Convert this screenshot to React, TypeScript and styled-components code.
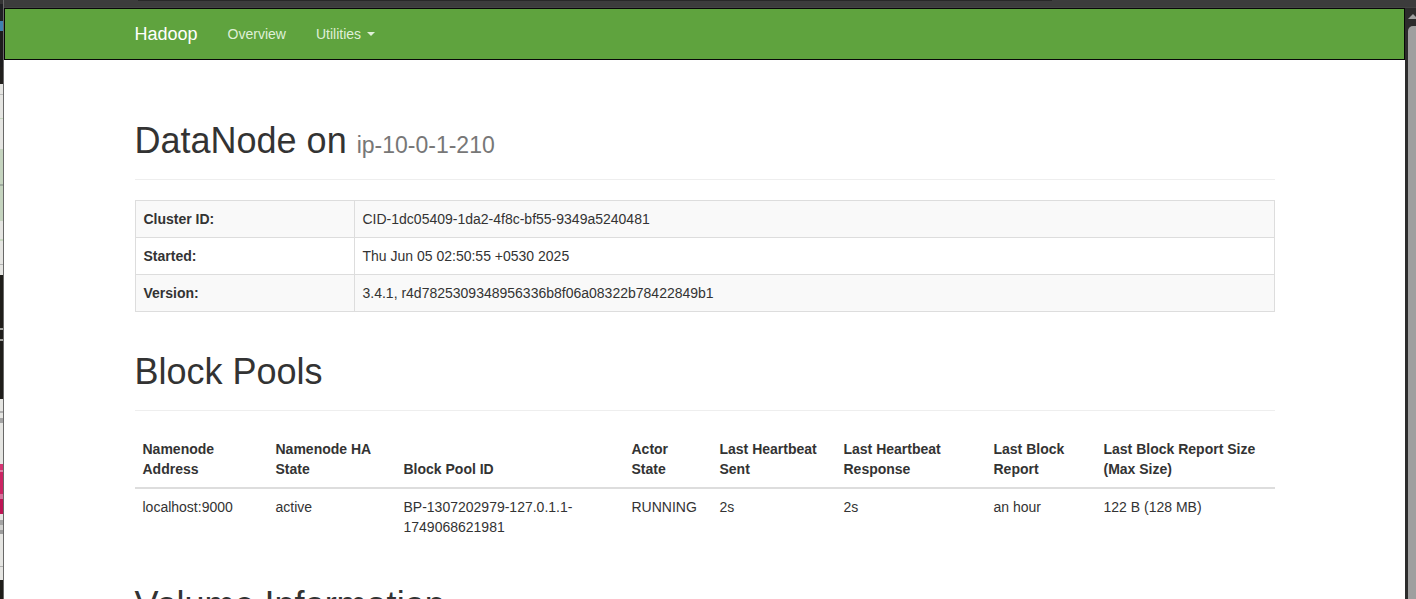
import React from "react";
import styled, { createGlobalStyle } from "styled-components";

const GlobalStyle = createGlobalStyle`
  *, *::before, *::after { box-sizing: border-box; }
  body {
    margin: 0;
    background: #ffffff;
    color: #333333;
    font-family: "Liberation Sans", Arial, sans-serif;
    font-size: 14px;
    line-height: 20px;
  }
`;

const Desktop = styled.div`
  display: flex;
  height: 100vh;
  overflow: hidden;
`;

const Backdrop = styled.div`
  display: flex;
  flex-direction: column;
  flex: 0 0 4px;
  border-right: 1px solid #686868;
`;

const Slice = styled.div<{ $h?: number; $color: string }>`
  flex: ${(p) => (p.$h ? `0 0 ${p.$h}px` : "1 0 0")};
  background: ${(p) => p.$color};
`;

const Window = styled.div`
  display: flex;
  flex-direction: column;
  flex: 1;
  min-width: 0;
`;

const WindowEdge = styled.div`
  flex: 0 0 8px;
  padding: 0 364px 0 134px;
  background: #3c3c3c;
  border-bottom: 1px solid #444444;

  &::before {
    content: "";
    display: block;
    height: 1px;
    background: #282828;
  }
`;

const View = styled.div`
  display: flex;
  flex: 1;
  min-height: 0;
`;

const Page = styled.div`
  flex: 1;
  min-width: 0;
  overflow: hidden;
  background: #ffffff;
`;

const Scrollbar = styled.div`
  display: flex;
  flex-direction: column;
  flex: 0 0 11px;
  padding: 6px 0 0 3px;
  overflow: hidden;
  background: #2c2c2c;
`;

const ScrollArrow = styled.svg`
  flex: none;
  display: block;
  margin-bottom: 7px;
`;

const ScrollThumb = styled.div`
  flex: 1;
  width: 14px;
  border-radius: 5px 5px 0 0;
  background: #9f9f9f;
`;

const Container = styled.div`
  max-width: 1170px;
  margin: 0 auto;
  padding: 0 15px;
`;

const Navbar = styled.header`
  background: #5fa33e;
  border: 1px solid #080808;
`;

const NavRow = styled(Container)`
  display: flex;
  align-items: center;
  gap: 30px;
  height: 50px;
`;

const Brand = styled.a`
  color: #ffffff;
  font-size: 18px;
  text-decoration: none;
`;

const NavItems = styled.nav`
  display: flex;
  gap: 30px;
`;

const NavLink = styled.a`
  color: #dff0d8;
  text-decoration: none;
`;

const NavButton = styled.button`
  display: flex;
  align-items: center;
  gap: 6px;
  padding: 0;
  border: 0;
  background: none;
  color: #dff0d8;
  font: inherit;
`;

const Caret = styled.span`
  border-top: 4px solid currentColor;
  border-left: 4px solid transparent;
  border-right: 4px solid transparent;
`;

const Content = styled(Container).attrs({ as: "main" })`
  padding-top: 61px;
`;

const Heading = styled.h1`
  margin: 0 0 20px;
  padding-bottom: 19px;
  border-bottom: 1px solid #eeeeee;
  font-size: 36px;
  font-weight: 500;
  line-height: 39px;

  table + & {
    margin-top: 40px;
  }
`;

const Host = styled.small`
  color: #777777;
  font-size: 23px;
  font-weight: 400;
  line-height: 1;
`;

const DataTable = styled.table`
  width: 100%;
  table-layout: fixed;
  border-collapse: collapse;

  th,
  td {
    padding: 8px;
    text-align: left;
    vertical-align: top;
  }
`;

const InfoTable = styled(DataTable)`
  th,
  td {
    border: 1px solid #dddddd;
  }

  th {
    width: 219px;
  }

  tr:nth-child(odd) {
    background: #f9f9f9;
  }
`;

const PoolTable = styled(DataTable)`
  thead th {
    vertical-align: bottom;
    border-bottom: 2px solid #dddddd;
  }
`;

const Col = styled.col<{ $w: number }>`
  width: ${(p) => p.$w}px;
`;

const slices: [number, string][] = [
  [4, "#343434"],
  [17, "#202124"],
  [10, "#3f80b0"],
  [36, "#1d1d1d"],
  [17, "#211f1c"],
  [10, "#e5e5e2"],
  [1, "#bcbcbc"],
  [23, "#e5e5e2"],
  [1, "#c4d6bd"],
  [30, "#e5e5e2"],
  [35, "#c5d4bf"],
  [2, "#a0aca0"],
  [35, "#c5d4bf"],
  [18, "#e5e5e2"],
  [2, "#c7d8c0"],
  [23, "#e5e5e2"],
  [1, "#b4b4b4"],
  [10, "#e5e5e2"],
  [53, "#1f1d1a"],
  [2, "#a0a09c"],
  [9, "#1f1d1a"],
  [2, "#a0a09c"],
  [58, "#1f1d1a"],
  [12, "#e5e5e2"],
  [2, "#b0b0b0"],
  [5, "#e5e5e2"],
  [5, "#a4a4a4"],
  [41, "#e5e5e2"],
  [6, "#d63372"],
  [2, "#dd80a4"],
  [22, "#cc2463"],
  [5, "#d6709a"],
  [15, "#bd1454"],
  [6, "#e5e5e2"],
  [5, "#a4a4a4"],
  [5, "#d0d0ce"],
  [4, "#9c9c9c"],
  [32, "#e5e5e2"],
  [1, "#b0b0b0"],
  [13, "#e5e5e2"],
];

const info = [
  ["Cluster ID:", "CID-1dc05409-1da2-4f8c-bf55-9349a5240481"],
  ["Started:", "Thu Jun 05 02:50:55 +0530 2025"],
  ["Version:", "3.4.1, r4d7825309348956336b8f06a08322b78422849b1"],
];

const pools = [
  { title: "Namenode Address", width: 133, value: "localhost:9000" },
  { title: "Namenode HA State", width: 128, value: "active" },
  { title: "Block Pool ID", width: 228, value: "BP-1307202979-127.0.1.1-1749068621981" },
  { title: "Actor State", width: 88, value: "RUNNING" },
  { title: "Last Heartbeat Sent", width: 124, value: "2s" },
  { title: "Last Heartbeat Response", width: 150, value: "2s" },
  { title: "Last Block Report", width: 110, value: "an hour" },
  { title: "Last Block Report Size (Max Size)", width: 179, value: "122 B (128 MB)" },
];

export default function App() {
  return (
    <Desktop>
      <GlobalStyle />
      <Backdrop aria-hidden="true">
        {slices.map(([h, color], i) => (
          <Slice key={i} $h={h} $color={color} />
        ))}
        <Slice $color="#1f1d1a" />
      </Backdrop>
      <Window>
        <WindowEdge />
        <View>
          <Page>
            <Navbar>
              <NavRow>
                <Brand href="#">Hadoop</Brand>
                <NavItems>
                  <NavLink href="#overview">Overview</NavLink>
                  <NavButton type="button" aria-haspopup="menu">
                    Utilities <Caret />
                  </NavButton>
                </NavItems>
              </NavRow>
            </Navbar>
            <Content>
              <Heading>
                DataNode on <Host>ip-10-0-1-210</Host>
              </Heading>
              <InfoTable>
                <tbody>
                  {info.map(([name, value]) => (
                    <tr key={name}>
                      <th scope="row">{name}</th>
                      <td>{value}</td>
                    </tr>
                  ))}
                </tbody>
              </InfoTable>
              <Heading>Block Pools</Heading>
              <PoolTable>
                <colgroup>
                  {pools.map((p) => (
                    <Col key={p.title} $w={p.width} />
                  ))}
                </colgroup>
                <thead>
                  <tr>
                    {pools.map((p) => (
                      <th key={p.title} scope="col">{p.title}</th>
                    ))}
                  </tr>
                </thead>
                <tbody>
                  <tr>
                    {pools.map((p) => (
                      <td key={p.title}>{p.value}</td>
                    ))}
                  </tr>
                </tbody>
              </PoolTable>
              <Heading>Volume Information</Heading>
            </Content>
          </Page>
          <Scrollbar aria-hidden="true">
            <ScrollArrow width="10" height="5" viewBox="0 0 10 5">
              <path d="M0 5 L5 0 L10 5 Z" fill="#9f9f9f" />
            </ScrollArrow>
            <ScrollThumb />
          </Scrollbar>
        </View>
      </Window>
    </Desktop>
  );
}
